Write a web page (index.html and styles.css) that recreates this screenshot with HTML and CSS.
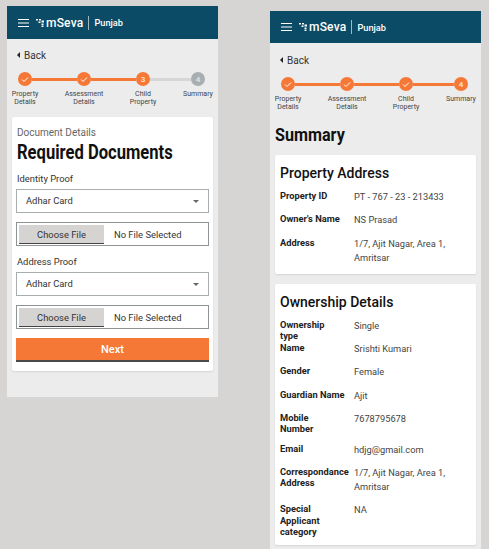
FILE: index.html
```html
<!DOCTYPE html>
<html lang="en">
<head>
<meta charset="utf-8">
<title>mSeva Punjab</title>
<link rel="stylesheet" href="styles.css">
</head>
<body>
<section class="screen screen-form">
  <header class="topbar">
    <svg class="menu" viewBox="0 0 11 8" width="11" height="8"><path d="M0 .5h11M0 4h11M0 7.500h11" stroke="#fff" stroke-width="1"/></svg>
    <svg class="logo-mark" viewBox="0 0 8 8" width="8" height="8"><path d="M0 0h2v1.500H0zM3 0h2v1.500H3zM5.500 1.500h2.500v2H5.500zM2.500 2.500h2v1.500h-2zM5.500 4.500h2v1.500h-2zM5.500 6.500h2V8h-2z" fill="#fff"/></svg>
    <span class="brand">mSeva</span><span class="divider"></span><span class="city">Punjab</span>
  </header>
  <div class="back"><span class="back-arrow"></span>Back</div>
  <div class="stepper">
    <div class="step done"><span class="dot"><svg viewBox="0 0 14 14" width="14" height="14"><path d="M4 7.500l2 2 4-4" fill="none" stroke="#fff" stroke-width="1"/></svg></span><span class="step-label">Property<br>Details</span></div>
    <span class="link link-long"></span>
    <div class="step done"><span class="dot"><svg viewBox="0 0 14 14" width="14" height="14"><path d="M4 7.500l2 2 4-4" fill="none" stroke="#fff" stroke-width="1"/></svg></span><span class="step-label">Assessment<br>Details</span></div>
    <span class="link link-long"></span>
    <div class="step done"><span class="dot">3</span><span class="step-label">Child<br>Property</span></div>
    <span class="link link-short link-off"></span>
    <div class="step"><span class="dot dot-off">4</span><span class="step-label">Summary</span></div>
  </div>
  <div class="card form-card">
    <p class="eyebrow">Document Details</p>
    <h1 class="condensed form-title">Required Documents</h1>
    <p class="field-label">Identity Proof</p>
    <div class="select">Adhar Card<span class="caret"></span></div>
    <div class="file"><span class="file-btn">Choose File</span><span class="file-name">No File Selected</span></div>
    <p class="field-label field-label-next">Address Proof</p>
    <div class="select">Adhar Card<span class="caret"></span></div>
    <div class="file"><span class="file-btn">Choose File</span><span class="file-name">No File Selected</span></div>
    <div class="next">Next</div>
  </div>
</section>

<section class="screen screen-summary">
  <header class="topbar">
    <svg class="menu" viewBox="0 0 11 8" width="11" height="8"><path d="M0 .5h11M0 4h11M0 7.500h11" stroke="#fff" stroke-width="1"/></svg>
    <svg class="logo-mark" viewBox="0 0 8 8" width="8" height="8"><path d="M0 0h2v1.500H0zM3 0h2v1.500H3zM5.500 1.500h2.500v2H5.500zM2.500 2.500h2v1.500h-2zM5.500 4.500h2v1.500h-2zM5.500 6.500h2V8h-2z" fill="#fff"/></svg>
    <span class="brand">mSeva</span><span class="divider"></span><span class="city">Punjab</span>
  </header>
  <div class="back"><span class="back-arrow"></span>Back</div>
  <div class="stepper">
    <div class="step done"><span class="dot"><svg viewBox="0 0 14 14" width="14" height="14"><path d="M4 7.500l2 2 4-4" fill="none" stroke="#fff" stroke-width="1"/></svg></span><span class="step-label">Property<br>Details</span></div>
    <span class="link link-long"></span>
    <div class="step done"><span class="dot"><svg viewBox="0 0 14 14" width="14" height="14"><path d="M4 7.500l2 2 4-4" fill="none" stroke="#fff" stroke-width="1"/></svg></span><span class="step-label">Assessment<br>Details</span></div>
    <span class="link link-long"></span>
    <div class="step done"><span class="dot"><svg viewBox="0 0 14 14" width="14" height="14"><path d="M4 7.500l2 2 4-4" fill="none" stroke="#fff" stroke-width="1"/></svg></span><span class="step-label">Child<br>Property</span></div>
    <span class="link link-short"></span>
    <div class="step done"><span class="dot">4</span><span class="step-label">Summary</span></div>
  </div>
  <h1 class="condensed summary-title">Summary</h1>
  <div class="card info-card">
    <h2 class="card-title">Property Address</h2>
    <dl class="rows">
      <dt>Property ID</dt><dd>PT - 767 - 23 - 213433</dd>
      <dt>Owner's Name</dt><dd>NS Prasad</dd>
      <dt>Address</dt><dd>1/7, Ajit Nagar, Area 1,<br>Amritsar</dd>
    </dl>
  </div>
  <div class="card info-card">
    <h2 class="card-title">Ownership Details</h2>
    <dl class="rows">
      <dt class="tight">Ownership<br>type</dt><dd>Single</dd>
      <dt>Name</dt><dd>Srishti Kumari</dd>
      <dt>Gender</dt><dd>Female</dd>
      <dt>Guardian Name</dt><dd>Ajit</dd>
      <dt>Mobile<br>Number</dt><dd>7678795678</dd>
      <dt>Email</dt><dd>hdjg@gmail.com</dd>
      <dt>Correspondance<br>Address</dt><dd>1/7, Ajit Nagar, Area 1,<br>Amritsar</dd>
      <dt>Special<br>Applicant<br>category</dt><dd>NA</dd>
    </dl>
  </div>
</section>
</body>
</html>
```
FILE: styles.css
```css
* { box-sizing: border-box; }
html, body { height: 100%; }
body {
  margin: 0;
  height: 549px;
  overflow: hidden;
  background: #d6d5d3;
  font-family: Roboto, "Liberation Sans", sans-serif;
  color: #1f1f1f;
  display: flex;
  align-items: flex-start;
  padding-left: 7px;
  gap: 52px;
}
p, h1, h2, dl, dd { margin: 0; }

.screen { width: 211px; background: #ececec; flex: none; }
.screen-form { margin-top: 6px; height: 391px; }
.screen-summary { margin-top: 11px; height: 538px; }

.topbar {
  height: 33px;
  background: #0b4b66;
  color: #fff;
  display: flex;
  align-items: center;
  padding-left: 11px;
}
.screen-summary .topbar { height: 32px; }
.logo-mark { margin-left: 7px; }
.brand { font-size: 12px; font-weight: 500; letter-spacing: .2px; margin-left: 2px; }
.divider { width: 1px; height: 14px; background: #9fb9c4; margin: 0 5px 0 5px; }
.city { font-size: 9.200px; font-weight: 500; }

.back { display: flex; align-items: center; font-size: 10px; color: #333; height: 12px; margin: 10px 0 0 10px; }
.screen-summary .back { margin-top: 11px; }
.back-arrow { width: 0; height: 0; border: 3px solid transparent; border-right: 3px solid #222; border-left: 0; margin-right: 4px; }

.stepper { display: flex; align-items: flex-start; padding-left: 11px; margin-top: 11px; height: 45px; }
.step { width: 14px; flex: none; display: flex; flex-direction: column; align-items: center; }
.dot {
  width: 14px; height: 14px; border-radius: 50%;
  background: #f67837; color: #fde8dc;
  font-size: 8px; font-weight: 500;
  display: flex; align-items: center; justify-content: center;
}
.dot-off { background: #a9aeb1; color: #e6e6e6; }
.step-label { font-size: 7px; line-height: 8.300px; text-align: center; white-space: nowrap; color: #444; margin-top: 4px; }
.link { height: 3px; margin-top: 6px; background: #f67837; flex: none; }
.link-long { width: 45px; }
.link-short { width: 41px; }
.link-off { background: #d6d6d6; }

.card { background: #fff; border-radius: 2px; box-shadow: 0 1px 2px rgba(0,0,0,.1); }
.form-card { margin: 0 5px; height: 254px; padding: 10px 5px 0; }
.eyebrow { font-size: 10px; line-height: 12px; color: #666; }
.condensed { font-family: Roboto, "Liberation Sans", sans-serif; font-weight: 700; transform-origin: left center; color: #111; white-space: nowrap; }
.form-title { font-size: 19.500px; line-height: 22px; margin-top: 3px; transform: scaleX(.85); }
.field-label { font-size: 9.400px; line-height: 12px; color: #333; margin-top: 9px; }
.field-label-next { margin-top: 10px; }
.select {
  position: relative;
  height: 24px; margin: 4px -1px 0;
  border: 1px solid #a8adb0;
  font-size: 9.400px; line-height: 22px; padding-left: 9px; color: #333;
}
.caret { position: absolute; right: 9px; top: 10px; border: 3px solid transparent; border-top: 3px solid #666; border-bottom: 0; }
.file {
  display: flex; align-items: center;
  height: 24px; margin: 9px -1px 0; padding: 2px;
  border: 1px solid #8e9396;
  font-size: 9.400px; color: #333;
}
.file-btn { width: 85px; height: 19px; background: #d5d4d2; border-bottom: 1px solid #444; text-align: center; line-height: 19px; }
.file-name { margin-left: 10px; }
.next {
  height: 24px; margin: 9px -1px 0;
  background: #f67837; border-bottom: 2px solid #4a4a4a;
  color: #fff; font-size: 11px; font-weight: 500; text-align: center; line-height: 23px;
}

.summary-title { font-size: 19px; line-height: 22px; margin: 2px 0 0 5px; transform: scaleX(.85); }
.info-card { margin: 9px 5px 0; padding: 9px 5px 8px; }
.info-card + .info-card { margin-top: 10px; }
.card-title { font-size: 14px; font-weight: 500; line-height: 18px; color: #111; }
.rows { display: grid; grid-template-columns: 74px 1fr; row-gap: 8px; margin-top: 8px; font-size: 9.250px; }
.rows dt { font-weight: 700; font-size: 9.300px; line-height: 11.300px; color: #222; }
.rows dd { line-height: 14px; padding-bottom: 1.300px; color: #444; }
.rows .tight { margin-bottom: -8px; }
```
